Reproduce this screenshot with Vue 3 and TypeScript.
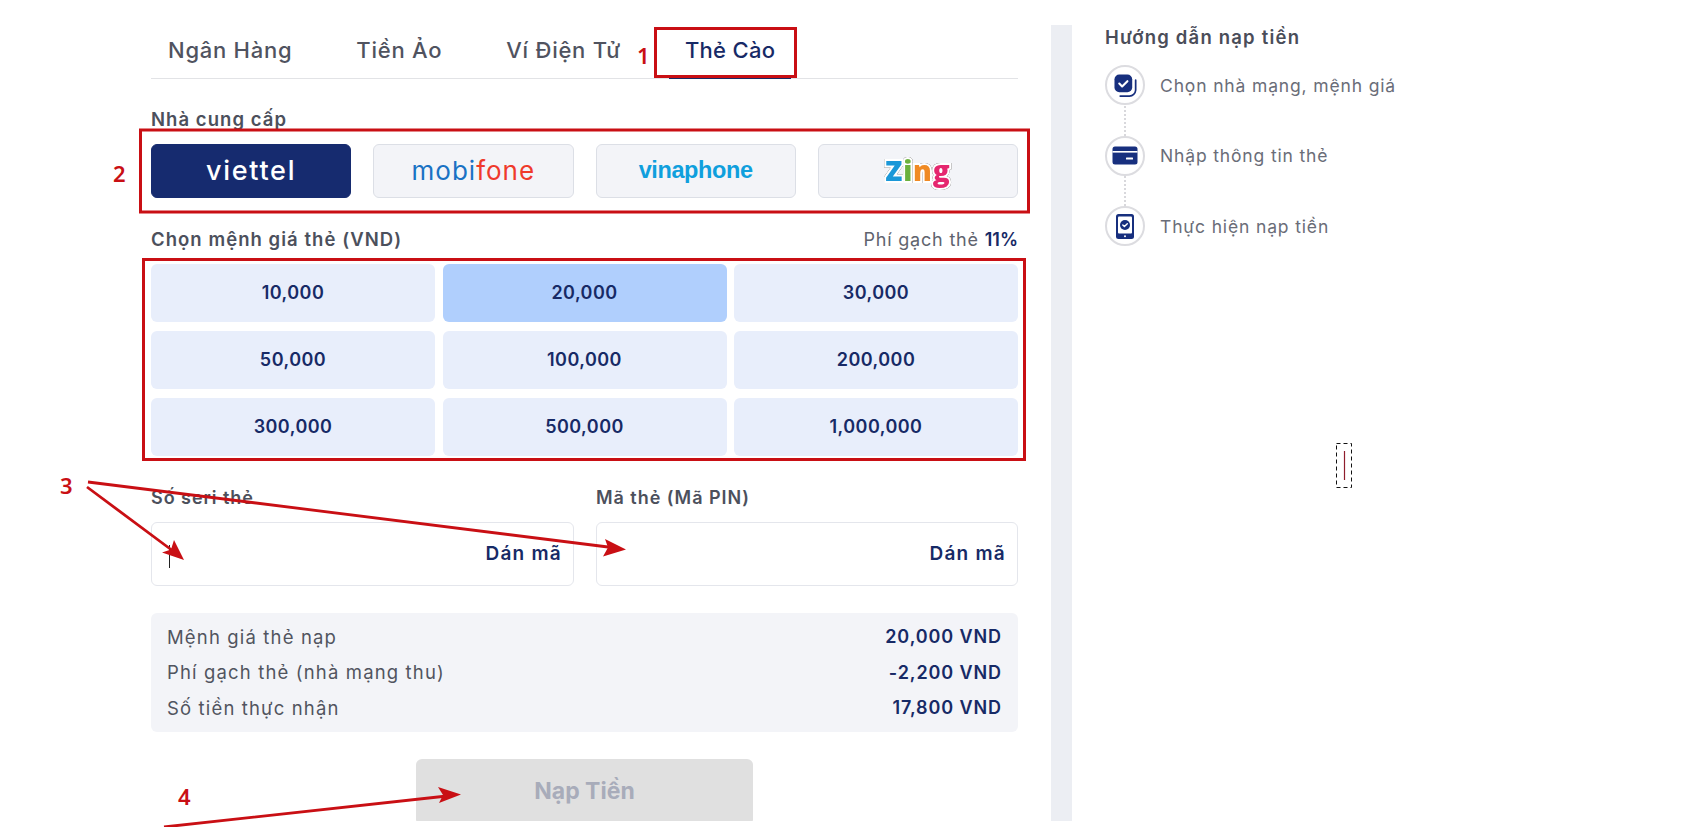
<script setup lang="ts">
const tabs: string[] = ['Ngân Hàng', 'Tiền Ảo', 'Ví Điện Tử', 'Thẻ Cào']
const amounts: string[] = ['10,000', '20,000', '30,000', '50,000', '100,000', '200,000', '300,000', '500,000', '1,000,000']
const summary: [string, string][] = [
  ['Mệnh giá thẻ nạp', '20,000 VND'],
  ['Phí gạch thẻ (nhà mạng thu)', '-2,200 VND'],
  ['Số tiền thực nhận', '17,800 VND'],
]
const fields: string[] = ['Số seri thẻ', 'Mã thẻ (Mã PIN)']
</script>

<template>
  <div class="page">
    <div class="shell">
      <main class="main">
        <nav class="tabs">
          <a v-for="(t, i) in tabs" :key="t" class="tab" :class="{ on: i === 3 }">{{ t }}</a>
        </nav>

        <div class="label head-label provider-label">Nhà cung cấp</div>
        <div class="providers">
          <button class="prov active"><span class="viettel">viettel</span></button>
          <button class="prov"><span class="mobifone">mobi<em>fone</em></span></button>
          <button class="prov"><span class="vina">vinaphone</span></button>
          <button class="prov">
            <span class="zing"><i class="z">Z</i><i class="i">i</i><i class="n">n</i><i class="g">g</i></span>
          </button>
        </div>

        <div class="amount-head">
          <span class="label head-label">Chọn mệnh giá thẻ (VND)</span>
          <span class="fee">Phí gạch thẻ <b>11%</b></span>
        </div>
        <div class="amounts">
          <button v-for="(a, i) in amounts" :key="a" class="amount" :class="{ on: i === 1 }">{{ a }}</button>
        </div>

        <div class="fields">
          <div v-for="(f, i) in fields" :key="f" class="field">
            <div class="label">{{ f }}</div>
            <div class="input">
              <span v-if="i === 0" class="caret"></span>
              <span class="paste">Dán mã</span>
            </div>
          </div>
        </div>

        <div class="summary">
          <div v-for="s in summary" :key="s[0]" class="sum-row">
            <span>{{ s[0] }}</span><b>{{ s[1] }}</b>
          </div>
        </div>

        <div class="submit-wrap"><button class="submit">Nạp Tiền</button></div>
      </main>

      <div class="bar"></div>

      <aside class="guide">
        <h3>Hướng dẫn nạp tiền</h3>
        <ul class="steps">
          <li class="step">
            <span class="circle">
              <svg width="23" height="23" viewBox="0 0 24 24">
                <rect x="0.5" y="0.5" width="18.5" height="18.5" rx="5" fill="#172f7e" />
                <path d="M5.5 10l3 3 5.5-5.5" fill="none" stroke="#fff" stroke-width="2.2" stroke-linecap="round" stroke-linejoin="round" />
                <path d="M22.6 6.5v10.500a6.500 6.500 0 0 1-6.500 6H6.500" fill="none" stroke="#172f7e" stroke-width="1.800" stroke-linecap="round" />
              </svg>
            </span>
            <span>Chọn nhà mạng, mệnh giá</span>
          </li>
          <li class="step">
            <span class="circle">
              <svg width="26" height="19" viewBox="0 0 26 19">
                <rect x="0.500" y="0.500" width="25" height="18" rx="2.500" fill="#172f7e" />
                <rect x="0.500" y="5" width="25" height="1.600" fill="#fff" />
                <rect x="14" y="11.500" width="7" height="2" rx="0.500" fill="#fff" />
              </svg>
            </span>
            <span>Nhập thông tin thẻ</span>
          </li>
          <li class="step">
            <span class="circle">
              <svg width="18" height="25" viewBox="0 0 18 25">
                <rect width="18" height="25" rx="2.500" fill="#172f7e" />
                <rect x="2" y="2.500" width="14" height="17" rx="1" fill="#fff" />
                <circle cx="9" cy="11" r="5" fill="#172f7e" />
                <path d="M6.800 11l1.600 1.600 2.900-2.900" fill="none" stroke="#fff" stroke-width="1.400" stroke-linecap="round" stroke-linejoin="round" />
                <circle cx="9" cy="22.300" r="1" fill="#fff" />
              </svg>
            </span>
            <span>Thực hiện nạp tiền</span>
          </li>
        </ul>
      </aside>
    </div>

    <svg class="marks" width="1701" height="827" viewBox="0 0 1701 827">
      <g fill="none" stroke="#c90f14" stroke-width="3">
        <rect x="655.500" y="28.500" width="140" height="48" />
        <rect x="140.500" y="130" width="888" height="82" />
        <rect x="143.500" y="259.500" width="881" height="200" />
        <path d="M88 482L612 547.500M87 487L175 552.500M164 827L447 796" stroke-width="2.800" />
      </g>
      <g fill="#c90f14">
        <path d="M626 549.500L603 556.500L608 547.500L605 539Z" />
        <path d="M184 560L162 552.500L171 549.500L174 540Z" />
        <path d="M461 794.500L439 803L443 795L438 787Z" />
      </g>
      <g class="nums" fill="#c90f14">
        <text x="637" y="64">1</text>
        <text x="113" y="182">2</text>
        <text x="60" y="494">3</text>
        <text x="178" y="805">4</text>
      </g>
      <rect x="1336.500" y="443.500" width="15" height="44" fill="#fff" stroke="#111" stroke-dasharray="4 3" />
      <path d="M1344.500 451V480" stroke="#8f1d2c" stroke-width="1.200" />
    </svg>
  </div>
</template>

<style scoped>
.page {
  position: relative;
  width: 1701px;
  height: 827px;
  overflow: hidden;
  background: #fff;
  font-family: Inter, "Noto Sans", sans-serif;
  color: #4c505c;
}
.shell {
  display: flex;
  height: 796px;
  margin-top: 25px;
  padding-left: 151px;
  overflow: hidden;
  box-sizing: border-box;
}
.main {
  width: 867px;
  flex: none;
}
.tabs {
  display: flex;
  gap: 32px;
  height: 54px;
  box-sizing: border-box;
  border-bottom: 1px solid #e2e3e6;
  padding-left: 1px;
}
.tab {
  padding: 10px 16px 0;
  font-size: 22px;
  line-height: 30px;
  font-weight: 500;
  letter-spacing: 0.75px;
  color: #50535f;
  height: 54px;
  box-sizing: border-box;
  white-space: nowrap;
}
.tab.on {
  color: #172a66;
  letter-spacing: 0.3px;
  border-bottom: 3px solid #172a66;
}
.label {
  font-size: 18px;
  font-weight: 600;
  line-height: 22px;
  letter-spacing: 0.95px;
  color: #4c505c;
}
.head-label {
  font-size: 18.500px;
  letter-spacing: 1.05px;
}
.provider-label {
  margin-top: 29px;
}
.providers {
  display: grid;
  grid-template-columns: repeat(4, 1fr);
  gap: 22px;
  margin-top: 14px;
}
.prov {
  height: 54px;
  border: 1px solid #dcdfe6;
  border-radius: 6px;
  background: #f3f4f8;
  padding: 0;
  display: flex;
  align-items: center;
  justify-content: center;
  font-family: inherit;
}
.prov.active {
  background: #162b6f;
  border-color: #162b6f;
}
.viettel {
  color: #fff;
  font-size: 27px;
  font-weight: 500;
  letter-spacing: 1.700px;
  line-height: 30px;
}
.mobifone {
  color: #1a72c4;
  font-size: 26px;
  font-weight: 400;
  line-height: 30px;
  letter-spacing: 1px;
}
.mobifone em {
  font-style: normal;
  color: #ef3a2b;
}
.vina {
  color: #0f9fdd;
  font-family: "Liberation Sans", sans-serif;
  font-size: 23.500px;
  font-weight: 700;
  line-height: 30px;
  letter-spacing: -0.4px;
  margin-bottom: 3px;
}
.zing {
  display: flex;
  font-family: "Open Sans", sans-serif;
  font-size: 28px;
  font-weight: 800;
  line-height: 34px;
  letter-spacing: 0.8px;
  margin-bottom: 3px;
  filter: drop-shadow(0 0 0.7px #777) drop-shadow(0 0 0.4px #999);
}
.zing i {
  font-style: normal;
  -webkit-text-stroke: 4px #fff;
  paint-order: stroke fill;
}
.zing .z { color: #1b98d8; }
.zing .i { color: #6bb13d; }
.zing .n { color: #f08a24; }
.zing .g { color: #e5276f; }
.amount-head {
  display: flex;
  justify-content: space-between;
  align-items: center;
  margin-top: 30px;
  height: 22px;
}
.fee {
  font-size: 18px;
  font-weight: 400;
  letter-spacing: 0.8px;
  color: #60636e;
}
.fee b {
  color: #172a66;
  font-weight: 600;
  letter-spacing: 0;
}
.amounts {
  display: grid;
  grid-template-columns: repeat(3, 284px);
  column-gap: 7.500px;
  row-gap: 9px;
  margin-top: 14px;
}
.amount {
  height: 58px;
  border: 0;
  border-radius: 6px;
  background: #e8eefb;
  font-family: inherit;
  font-size: 18px;
  font-weight: 600;
  letter-spacing: 0.45px;
  color: #172a66;
  padding: 0 0 2px;
}
.amount.on {
  background: #b0cffd;
}
.fields {
  display: grid;
  grid-template-columns: 423px 422px;
  gap: 22px;
  margin-top: 31px;
}
.field .label {
  height: 22px;
}
.input {
  position: relative;
  display: flex;
  align-items: center;
  justify-content: flex-end;
  height: 64px;
  margin-top: 13px;
  padding: 0 11px 2px 0;
  box-sizing: border-box;
  border: 1px solid #e4e6ec;
  border-radius: 6px;
  background: #fff;
}
.caret {
  position: absolute;
  left: 17px;
  top: 22px;
  width: 1px;
  height: 23px;
  background: #222;
}
.paste {
  font-size: 19px;
  font-weight: 600;
  letter-spacing: 1.25px;
  color: #172a66;
}
.summary {
  margin-top: 27px;
  padding: 6px 16px 7px;
  height: 119px;
  box-sizing: border-box;
  border-radius: 6px;
  background: #f3f4f8;
  display: flex;
  flex-direction: column;
  justify-content: space-between;
}
.sum-row {
  display: flex;
  justify-content: space-between;
  align-items: center;
  height: 35px;
  font-size: 18.500px;
  font-weight: 400;
  letter-spacing: 1.15px;
  color: #51545f;
}
.sum-row b {
  font-size: 18px;
  font-weight: 600;
  letter-spacing: 0.9px;
  color: #172a66;
}
.submit-wrap {
  display: flex;
  justify-content: center;
  margin-top: 27px;
}
.submit {
  width: 337px;
  height: 66px;
  border: 0;
  border-radius: 6px;
  background: #e0e0e0;
  font-family: inherit;
  font-size: 23px;
  font-weight: 700;
  color: #a8acba;
  padding: 0 0 2px;
}
.bar {
  width: 21px;
  flex: none;
  margin-left: 33px;
  background: #eceef3;
}
.guide {
  margin-left: 33px;
  width: 340px;
}
.guide h3 {
  margin: 1px 0 0;
  font-size: 18.500px;
  line-height: 22px;
  font-weight: 600;
  letter-spacing: 1.2px;
  color: #4a4d59;
}
.steps {
  list-style: none;
  margin: 17px 0 0;
  padding: 0;
  display: flex;
  flex-direction: column;
  gap: 30.500px;
}
.step {
  position: relative;
  display: flex;
  align-items: center;
  gap: 15px;
  height: 40px;
  font-size: 17.500px;
  letter-spacing: 0.85px;
  color: #6a6d78;
  white-space: nowrap;
}
.step + .step::before {
  content: "";
  position: absolute;
  left: 19px;
  top: -30px;
  height: 30px;
  border-left: 2px dotted #d8d8dc;
}
.circle {
  flex: none;
  width: 40px;
  height: 40px;
  box-sizing: border-box;
  border: 2px solid #dcdce0;
  border-radius: 50%;
  display: flex;
  align-items: center;
  justify-content: center;
}
.marks {
  position: absolute;
  left: 0;
  top: 0;
  pointer-events: none;
}
.nums text {
  font-family: "Noto Sans", sans-serif;
  font-size: 22px;
  font-weight: 600;
}
</style>
